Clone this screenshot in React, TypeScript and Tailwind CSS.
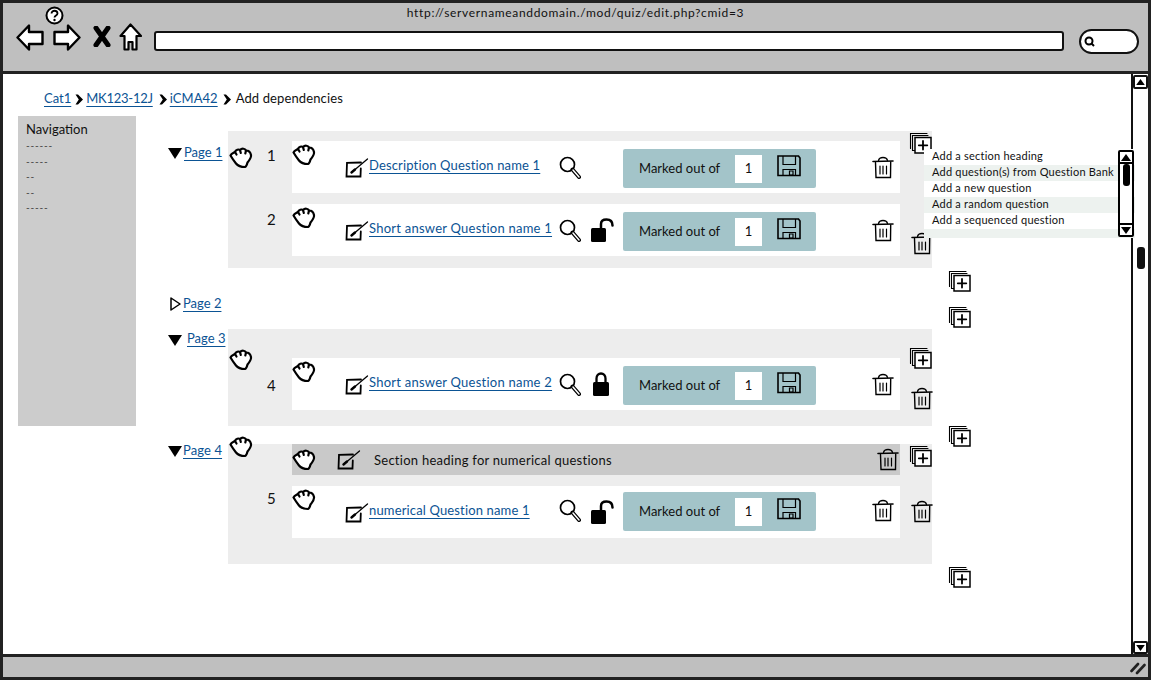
import React from "react";

const Hand = ({ className = "" }: { className?: string }) => (
  <svg viewBox="0 0 24 22" className={`w-[24px] h-[22px] shrink-0 ${className}`} fill="white" stroke="black" strokeWidth="2.200" strokeLinejoin="round" strokeLinecap="round">
    <path d="M1.500 8.500C2.500 6 4.500 6 6 5C7 2.500 9.500 2 11 3C13 1 16 1.500 17 3.500C19.500 3.500 21.500 5.500 22 8C22.500 11 20 13.500 18.500 15.500C18 17.500 17.500 19.500 16 20C13 20 9 19 7 16.500C5 14 3 11 1.500 8.500Z" />
    <path d="M6 5L7.500 7.500M11 3L11.800 6M17 3.500L16.300 6.500" fill="none" />
  </svg>
);

const Edit = ({ className = "" }: { className?: string }) => (
  <svg viewBox="0 0 24 20" className={`w-[24px] h-[20px] shrink-0 ${className}`} fill="none" stroke="black" strokeLinecap="round">
    <path d="M16 4.500L2 4.800L1.500 18.500L15.500 18.500L15.800 10.500" strokeWidth="1.800" />
    <path d="M6.500 14.500L22.500 1" strokeWidth="1.300" />
    <path d="M6.500 14.500L10 11.500" strokeWidth="2.400" />
  </svg>
);

const Search = ({ className = "" }: { className?: string }) => (
  <svg viewBox="0 0 22 23" className={`w-[22px] h-[23px] shrink-0 ${className}`} fill="none" stroke="black" strokeLinecap="round">
    <circle cx="8.500" cy="8.500" r="7" strokeWidth="1.700" />
    <path d="M13.500 13.500L20 21" strokeWidth="4" />
    <path d="M14 14L20 21" stroke="white" strokeWidth="1.500" />
  </svg>
);

const Lock = ({ open }: { open: boolean }) =>
  open ? (
    <svg viewBox="0 0 25 25" className="w-[25px] h-[25px] shrink-0" fill="black">
      <rect x="1" y="10" width="15" height="14" rx="1.500" />
      <path d="M11 11V6C11 3 13.500 1.500 16.500 1.500C20 1.500 22.500 3.500 22.500 7.500" fill="none" stroke="black" strokeWidth="2.500" strokeLinecap="round" />
    </svg>
  ) : (
    <svg viewBox="0 0 18 25" className="w-[18px] h-[25px] shrink-0 ml-[2px]" fill="black">
      <rect x="1" y="10" width="16" height="14" rx="1.500" />
      <path d="M4.500 11V6.500C4.500 3.500 6.500 1.500 9 1.500C11.500 1.500 13.500 3.500 13.500 6.500V11" fill="none" stroke="black" strokeWidth="2.300" />
    </svg>
  );

const Floppy = () => (
  <svg viewBox="0 0 24 22" className="w-[24px] h-[22px] shrink-0" fill="none" stroke="black" strokeWidth="1.200">
    <path d="M1 1H21.500L23 3V20.500H1Z" strokeWidth="1.600" />
    <path d="M6 1V9.500H18.500V1" />
    <path d="M6 20V14.500H18.500V20" />
    <path d="M12.500 16H16V20H12.500Z" />
  </svg>
);

const Trash = ({ className = "" }: { className?: string }) => (
  <svg viewBox="0 0 22 23" className={`w-[22px] h-[23px] shrink-0 ${className}`} fill="none" stroke="black" strokeLinecap="round">
    <path d="M1 5.500L21 5" strokeWidth="1.600" />
    <path d="M6.500 4.500C7 2 8.500 1.500 11 1.500C13.500 1.500 15 2 15.500 4.500" strokeWidth="1.300" />
    <path d="M3.500 6.500L4 21.500H18.500L18.700 6" strokeWidth="1.400" />
    <path d="M8 10V18M11 10V18M14.500 10V18" strokeWidth="1.200" />
  </svg>
);

const Add = ({ className = "" }: { className?: string }) => (
  <svg viewBox="0 0 23 22" className={`w-[23px] h-[22px] shrink-0 ${className}`} fill="none" stroke="black" strokeLinecap="round">
    <path d="M18 1.500H1.500V16.500" strokeWidth="1.100" />
    <path d="M19 3.500H3.500V18.500H6" strokeWidth="1.100" />
    <rect x="6" y="5.500" width="16" height="15.500" fill="white" strokeWidth="1.500" />
    <path d="M14 9V17.500M9.800 13.300H18.300" strokeWidth="1.800" />
  </svg>
);

const Link = ({ children, className = "" }: { children: React.ReactNode; className?: string }) => (
  <a className={`text-[#0b5394] underline underline-offset-[3px] decoration-[1px] whitespace-nowrap ${className}`}>{children}</a>
);

const Crumb = () => (
  <svg viewBox="0 0 8 11" className="w-[8px] h-[11px] shrink-0" fill="black">
    <path d="M0.500 0.500H3L8 5.500L3 10.500H0.500L3.800 5.500Z" />
  </svg>
);

const Down = () => (
  <svg viewBox="0 0 14 11" className="w-[14px] h-[11px] shrink-0" fill="black">
    <path d="M0 0H14L7 11Z" />
  </svg>
);

const Row = ({ num, numMt, leadHand, handMt = 0, name, high, lock }: { num: string; numMt: number; leadHand?: boolean; handMt?: number; name: string; high?: boolean; lock?: "open" | "closed" }) => (
  <div className="flex h-[52px]">
    <div className="w-[64px] flex shrink-0 items-start">
      <div className="w-[34px] shrink-0">{leadHand && <div style={{ marginTop: handMt }}><Hand className="ml-[1px]" /></div>}</div>
      <span className="text-[15px] leading-[18px] text-[#111]" style={{ marginTop: numMt, marginLeft: 5 }}>{num}</span>
    </div>
    <div className="w-[608px] bg-white flex items-start shrink-0">
      <div className="w-[267px] shrink-0 flex items-start">
        <Hand className="mt-[3px]" />
        <Edit className="mt-[17px] ml-[29px]" />
        <Link className={`text-[13px] leading-[16px] mt-[16px] ${name.startsWith("Short") ? "tracking-[0.24px]" : "tracking-[0.15px]"}`}>{name}</Link>
      </div>
      <Search className={high ? "mt-[13px]" : "mt-[15px]"} />
      <div className="w-[42px] shrink-0 mt-[14px] pl-[9px]">
        {lock && <Lock open={lock === "open"} />}
      </div>
      <div className={`w-[193px] h-[39px] bg-[#a3c4c9] rounded-[2px] flex items-center shrink-0 pl-[16px] ${high ? "mt-[6px]" : "mt-[8px]"}`}>
        <span className="w-[96px] text-[13px] text-[#111] whitespace-nowrap">Marked out of</span>
        <span className="w-[27px] h-[28px] bg-white flex items-center justify-center text-[13px] text-[#111]">1</span>
        <span className="ml-[15px] -mt-[6px]"><Floppy /></span>
      </div>
      <Trash className={`ml-[56px] ${high ? "mt-[13px]" : "mt-[15px]"}`} />
    </div>
  </div>
);

const Scroll = () => (
  <div className="h-full w-full flex flex-col border-2 border-black bg-white rounded-[2px]">
    <div className="h-[12px] border-b-2 border-black flex items-center justify-center shrink-0">
      <svg viewBox="0 0 10 7" className="w-[10px] h-[7px]"><path d="M5 0L10 7H0Z" fill="black" /></svg>
    </div>
    <div className="flex-1 flex justify-center">
      <div className="w-[7px] h-[22px] bg-black rounded-[3px]" />
    </div>
    <div className="h-[12px] border-t-2 border-black flex items-center justify-center shrink-0">
      <svg viewBox="0 0 10 7" className="w-[10px] h-[7px]"><path d="M5 7L10 0H0Z" fill="black" /></svg>
    </div>
  </div>
);

const menu = ["Add a section heading", "Add question(s) from Question Bank", "Add a new question", "Add a random question", "Add a sequenced question", ""];

export default function App() {
  return (
    <div className="w-[1151px] h-[681px] overflow-hidden bg-white [font-family:Lato,sans-serif]">
      <div className="w-[1151px] h-[680px] border-[3px] border-[#222] flex flex-col">
        {/* browser chrome */}
        <div className="h-[68px] shrink-0 bg-[#bfbfbf]">
          <div className="h-[21px] grid grid-cols-[1fr_auto_1fr]">
            <div className="pl-[42px] pt-[3px]">
              <svg viewBox="0 0 19 19" className="w-[19px] h-[19px]">
                <circle cx="9.500" cy="9.500" r="8" fill="white" stroke="black" strokeWidth="2" />
                <path d="M6.500 7.500C6.500 3.800 12.500 3.800 12.500 7.500C12.500 9.500 9.500 9.500 9.500 11.500" fill="none" stroke="black" strokeWidth="1.800" />
                <circle cx="9.500" cy="14" r="1.200" />
              </svg>
            </div>
            <div className="pt-[2px] text-[12px] leading-[16px] tracking-[0.67px] text-[#111] whitespace-nowrap">http://servernameanddomain./mod/quiz/edit.php?cmid=3</div>
            <div />
          </div>
          <div className="flex items-start pl-[13px] -mt-[1px]">
            <svg viewBox="0 0 28 27" className="w-[28px] h-[27px] mt-[1px] shrink-0"><path d="M1.500 13.500L13 1.500V8H26.500V20H13V25.500Z" fill="white" stroke="black" strokeWidth="2.400" strokeLinejoin="round" /></svg>
            <svg viewBox="0 0 28 27" className="w-[28px] h-[27px] mt-[1px] ml-[9px] shrink-0"><path d="M26.500 13.500L15 1.500V8H1.500V20H15V25.500Z" fill="white" stroke="black" strokeWidth="2.400" strokeLinejoin="round" /></svg>
            <svg viewBox="0 0 18 21" className="w-[18px] h-[21px] mt-[3px] ml-[12px] shrink-0"><path d="M3 2L15 19M15 2L3 19" stroke="black" strokeWidth="5" strokeLinecap="round" /></svg>
            <svg viewBox="0 0 23 28" className="w-[23px] h-[28px] ml-[8px] shrink-0"><path d="M11.500 1.500L22 13H17.500V26.500H13.500V19H9.500V26.500H5.500V13H1.500Z" fill="white" stroke="black" strokeWidth="2.200" strokeLinejoin="round" /></svg>
            <div className="w-[910px] h-[20px] mt-[8px] ml-[12px] bg-white border-2 border-[#111] rounded-[3px] shrink-0" />
            <div className="w-[60px] h-[25px] mt-[6px] ml-[15px] bg-white border-2 border-[#111] rounded-[13px] flex items-center pl-[3px] shrink-0">
              <svg viewBox="0 0 11 11" className="w-[11px] h-[11px]"><circle cx="5" cy="5" r="3.500" fill="none" stroke="black" strokeWidth="2" /><path d="M7.500 7.500L10 10" stroke="black" strokeWidth="2" /></svg>
            </div>
          </div>
        </div>

        {/* content */}
        <div className="h-[586px] shrink-0 flex border-t-[3px] border-b-[3px] border-[#222]">
          <div className="w-[1128px] shrink-0 relative">
            <div className="mt-[16px] h-[18px] ml-[41px] flex items-center text-[13px] text-[#111] whitespace-nowrap">
              <Link>Cat1</Link>
              <span className="ml-[4px] mr-[3px]"><Crumb /></span>
              <Link className="-tracking-[0.25px]">MK123-12J</Link>
              <span className="ml-[6px] mr-[3px]"><Crumb /></span>
              <Link className="tracking-[0.05px]">iCMA42</Link>
              <span className="ml-[5px] mr-[5px]"><Crumb /></span>
              <span className="tracking-[0.12px]">Add dependencies</span>
            </div>
            <div className="flex mt-[8px] items-start">
              <div className="ml-[15px] w-[118px] h-[310px] bg-[#cccccc] pl-[8px] pt-[6px] shrink-0 text-[#111]">
                <div className="text-[13px] leading-[15px]">Navigation</div>
                <div className="text-[10px] leading-[15.500px] tracking-[0.8px] mt-[1px] text-[#333]">
                  <div>------</div><div>-----</div><div>--</div><div>--</div><div>-----</div>
                </div>
              </div>
              <div className="ml-[32px] pt-[15px] flex flex-col text-[#111]">
                {/* Page 1 */}
                <div className="flex h-[137px]">
                  <div className="w-[60px] shrink-0 flex items-start pt-[17px]">
                    <Down />
                    <Link className="ml-[2px] -mt-[4px] text-[13px] leading-[16px]">Page 1</Link>
                  </div>
                  <div className="w-[704px] h-[137px] bg-[#ededed] flex shrink-0">
                    <div className="w-[672px] pt-[10px] flex flex-col gap-[11px]">
                      <Row num="1" numMt={5} leadHand handMt={6} name="Description Question name 1" />
                      <Row num="2" numMt={6} name="Short answer Question name 1" lock="open" />
                    </div>
                    <div className="flex flex-col pl-[9px]">
                      <Add className="mt-[1px]" />
                      <Trash className="mt-[78px] ml-[2px]" />
                    </div>
                  </div>
                  <Add className="ml-[16px] mt-[139px]" />
                </div>
                {/* Page 2 */}
                <div className="flex h-[61px]">
                  <div className="w-[60px] shrink-0 flex items-start pt-[28px] pl-[2px]">
                    <svg viewBox="0 0 11 14" className="w-[11px] h-[14px] mt-[1px] shrink-0"><path d="M1 1L10 7L1 13Z" fill="white" stroke="black" strokeWidth="1.500" strokeLinejoin="round" /></svg>
                    <Link className="ml-[2px] text-[13px] leading-[16px] -mt-[1px]">Page 2</Link>
                  </div>
                  <div className="w-[704px] shrink-0" />
                  <Add className="ml-[16px] mt-[38px]" />
                </div>
                {/* Page 3 */}
                <div className="flex h-[115px]">
                  <div className="w-[60px] shrink-0 flex items-start pt-[6px]">
                    <Down />
                    <Link className="ml-[5px] -mt-[5px] text-[13px] leading-[16px]">Page 3</Link>
                  </div>
                  <div className="w-[704px] h-[97px] bg-[#ededed] flex shrink-0">
                    <div className="w-[672px] pt-[29px]">
                      <Row num="4" numMt={18} leadHand handMt={-9} name="Short answer Question name 2" lock="closed" />
                    </div>
                    <div className="flex flex-col pl-[9px]">
                      <Add className="mt-[18px]" />
                      <Trash className="mt-[18px] ml-[2px]" />
                    </div>
                  </div>
                  <Add className="ml-[16px] mt-[96px]" />
                </div>
                {/* Page 4 */}
                <div className="flex h-[120px]">
                  <div className="w-[60px] shrink-0 flex items-start pt-[2px]">
                    <Down />
                    <Link className="ml-[1px] -mt-[4px] text-[13px] leading-[16px] tracking-[0.1px]">Page 4</Link>
                  </div>
                  <div className="w-[704px] h-[120px] bg-[#ededed] flex shrink-0">
                    <div className="w-[672px] flex flex-col gap-[11px]">
                      <div className="flex h-[31px]">
                        <div className="w-[64px] shrink-0"><Hand className="ml-[1px] -mt-[8px]" /></div>
                        <div className="w-[608px] bg-[#c9c9c9] flex items-center shrink-0">
                          <Hand />
                          <Edit className="ml-[21px]" />
                          <span className="ml-[13px] mt-[3px] text-[13px] tracking-[0.26px] text-[#111] whitespace-nowrap">Section heading for numerical questions</span>
                          <Trash className="ml-auto mr-[1px]" />
                        </div>
                      </div>
                      <Row num="5" numMt={3} name="numerical Question name 1" high lock="open" />
                    </div>
                    <div className="flex flex-col pl-[9px]">
                      <Add className="mt-[1px]" />
                      <Trash className="mt-[33px] ml-[2px]" />
                    </div>
                  </div>
                  <Add className="ml-[16px] mt-[122px]" />
                </div>
              </div>
            </div>

            {/* dropdown overlay */}
            <div className="absolute left-[921px] top-[75px] w-[211px] h-[89px] text-[11px] text-[#111]">
              {menu.map((m, i) => (
                <div key={i} className={`pl-[8px] tracking-[0.22px] whitespace-nowrap ${i === 5 ? "h-[9px]" : "h-[16px] leading-[14px]"} ${i % 2 ? "bg-[#edf2ef]" : "bg-white"}`}>{m}</div>
              ))}
              <div className="absolute left-[194px] top-[1px] w-[16px] h-[87px]">
                <Scroll />
              </div>
            </div>
          </div>

          {/* main scrollbar */}
          <div className="w-[17px] shrink-0">
            <div className="h-full w-full border-l-2 border-[#111] flex flex-col">
              <div className="h-[14px] mt-[1px] border-2 border-[#111] flex items-center justify-center shrink-0 rounded-[2px]">
                <svg viewBox="0 0 10 7" className="w-[9px] h-[6px]"><path d="M5 0L10 7H0Z" fill="black" /></svg>
              </div>
              <div className="flex-1 flex justify-center pt-[158px]">
                <div className="w-[8px] h-[22px] bg-[#111] rounded-[3px]" />
              </div>
              <div className="h-[13px] border-2 border-[#111] flex items-center justify-center shrink-0 rounded-[2px]">
                <svg viewBox="0 0 10 7" className="w-[9px] h-[6px]"><path d="M5 7L10 0H0Z" fill="black" /></svg>
              </div>
            </div>
          </div>
        </div>

        {/* status bar */}
        <div className="flex-1 bg-[#bfbfbf] flex items-center justify-end pr-[2px]">
          <svg viewBox="0 0 16 15" className="w-[16px] h-[15px]"><path d="M1.500 11L8 4M7 13L14.500 5" stroke="#222" strokeWidth="2.600" strokeLinecap="round" /></svg>
        </div>
      </div>
    </div>
  );
}
